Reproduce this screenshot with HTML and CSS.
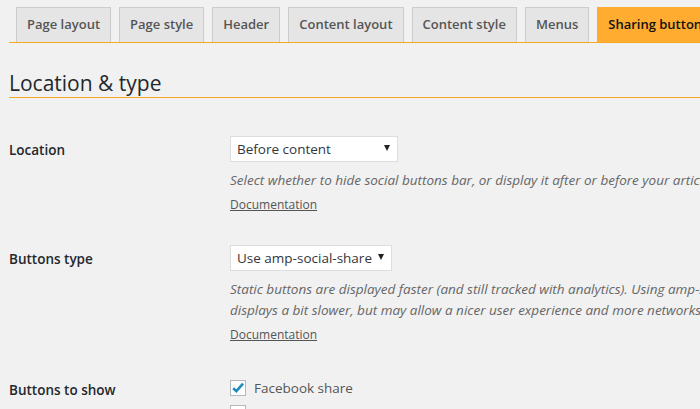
FILE: index.html
```html
<!DOCTYPE html>
<html>
<head>
<meta charset="utf-8">
<link rel="stylesheet" href="styles.css">
</head>
<body>
<div class="wrap">
  <nav class="tabs">
    <a class="tab">Page layout</a>
    <a class="tab">Page style</a>
    <a class="tab">Header</a>
    <a class="tab">Content layout</a>
    <a class="tab">Content style</a>
    <a class="tab">Menus</a>
    <a class="tab active">Sharing buttons</a>
  </nav>
  <h2 class="section-title">Location &amp; type</h2>

  <div class="row row-location">
    <div class="label">Location</div>
    <div class="field">
      <div class="select select-location"><span>Before content</span><span class="arrow"></span></div>
      <p class="desc">Select whether to hide social buttons bar, or display it after or before your article content.</p>
      <a class="doc">Documentation</a>
    </div>
  </div>

  <div class="row row-type">
    <div class="label">Buttons type</div>
    <div class="field">
      <div class="select select-type"><span>Use amp-social-share</span><span class="arrow"></span></div>
      <p class="desc">Static buttons are displayed faster (and still tracked with analytics). Using amp-social-share<br>displays a bit slower, but may allow a nicer user experience and more networks.</p>
      <a class="doc">Documentation</a>
    </div>
  </div>

  <div class="row row-show">
    <div class="label">Buttons to show</div>
    <div class="field">
      <label class="check"><span class="box"><svg width="16" height="16" viewBox="0 0 16 16"><path d="M3.2 8.2 L6.4 11.2 L13 3.6" fill="none" stroke="#1e8cbe" stroke-width="2.6" stroke-linecap="butt" stroke-linejoin="miter"/></svg></span><span>Facebook share</span></label>
      <label class="check"><span class="box"></span><span>Twitter</span></label>
    </div>
  </div>
</div>
</body>
</html>
```

FILE: styles.css
```css
html, body {
  margin: 0;
  padding: 0;
  background: #f1f1f1;
  overflow: hidden;
  height: 409px;
}
body {
  font-family: "Open Sans", "Noto Sans", sans-serif;
  font-size: 13px;
  color: #444;
}
.wrap {
  padding-left: 9px;
}
.tabs {
  display: flex;
  gap: 8px;
  margin-top: 7px;
  padding-left: 7px;
  border-bottom: 1px solid #f5a623;
  white-space: nowrap;
  height: 35px;
}
.tab {
  flex: none;
  box-sizing: border-box;
  height: 35px;
  padding: 0 10px;
  line-height: 33px;
  border: 1px solid #cccccc;
  border-bottom: none;
  background: #e5e5e5;
  color: #555;
  font-weight: 600;
  font-size: 13px;
}
.tab.active {
  background: #ffac30;
  border-color: #ffac30;
  color: #111;
}
.section-title {
  margin: 0;
  margin-top: 26px;
  font-size: 21px;
  font-weight: 400;
  color: #23282d;
  line-height: 28px;
  padding-bottom: 0;
  border-bottom: 1px solid #f5a623;
}
.row {
  display: grid;
  grid-template-columns: 221px 1fr;
}
.row-location { margin-top: 38px; }
.row-type { margin-top: 30px; }
.row-show { margin-top: 35px; }
.label {
  font-weight: 600;
  color: #23282d;
  font-size: 13.5px;
  line-height: 20px;
  padding-top: 4px;
}
.row-show .label { padding-top: 0; }
.field {
  white-space: nowrap;
}
.select {
  box-sizing: border-box;
  height: 26px;
  border: 1px solid #dddddd;
  background: #fff;
  display: flex;
  align-items: center;
  justify-content: space-between;
  padding: 0 7px 0 6px;
  color: #32373c;
  font-size: 13.5px;
}
.select-location { width: 168px; }
.select-type { width: 162px; }
.arrow {
  width: 0;
  height: 0;
  border-left: 3.5px solid transparent;
  border-right: 3.5px solid transparent;
  border-top: 6px solid #222;
  margin-top: -2px;
}
.desc {
  margin: 8px 0 0 0;
  font-style: italic;
  color: #666;
  font-size: 13.5px;
  line-height: 21px;
}
.doc {
  display: inline-block;
  margin-top: 4px;
  font-size: 12px;
  color: #555;
  text-decoration: underline;
  line-height: 20px;
}
.check {
  display: flex;
  align-items: center;
  gap: 8px;
  height: 16px;
  margin-bottom: 9px;
  color: #555;
  font-size: 13.5px;
}
.box {
  box-sizing: border-box;
  width: 16px;
  height: 16px;
  border: 1px solid #b4b9be;
  background: #fff;
  display: flex;
  align-items: center;
  justify-content: center;
}
.box svg {
  display: block;
  margin: -1px;
}
```
